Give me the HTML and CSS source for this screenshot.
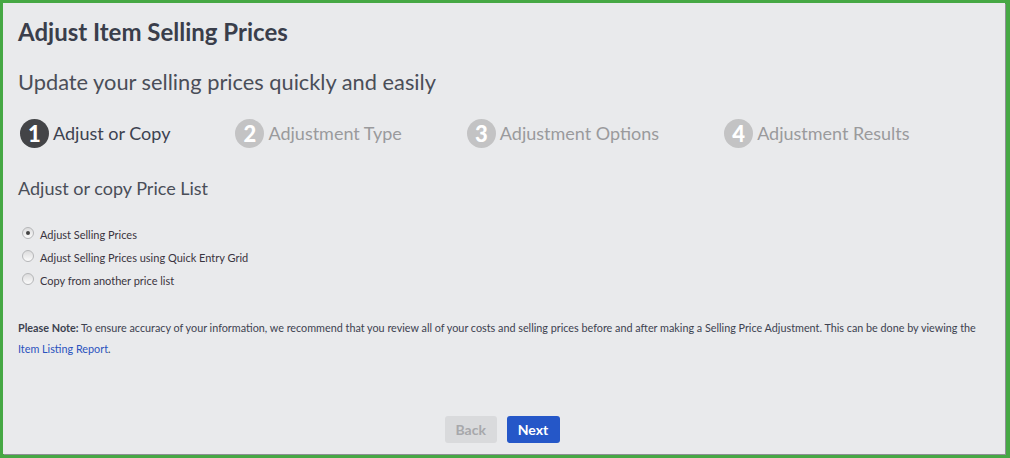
FILE: index.html
```html
<!DOCTYPE html>
<html>

<head>
    <meta charset="UTF-8">
    <title>Adjust Item Selling Prices</title>
    <link rel="stylesheet" href="styles.css">
</head>

<body>
    <div class="panel">
        <h1 class="title">Adjust Item Selling Prices</h1>
        <h2 class="subtitle">Update your selling prices quickly and easily</h2>

        <ul class="steps">
            <li class="step active"><span class="num">1</span>Adjust or Copy</li>
            <li class="step"><span class="num">2</span>Adjustment Type</li>
            <li class="step"><span class="num">3</span>Adjustment Options</li>
            <li class="step"><span class="num">4</span>Adjustment Results</li>
        </ul>

        <h3 class="section">Adjust or copy Price List</h3>

        <form class="options">
            <label class="option"><input type="radio" name="mode" checked><span class="dot"></span>Adjust Selling Prices</label>
            <label class="option"><input type="radio" name="mode"><span class="dot"></span>Adjust Selling Prices using Quick Entry Grid</label>
            <label class="option"><input type="radio" name="mode"><span class="dot"></span>Copy from another price list</label>
        </form>

        <p class="note"><b>Please Note:</b> To ensure accuracy of your information, we recommend that you review all of your costs and selling prices before and after making a Selling Price Adjustment. This can be done by viewing the <a href="#">Item Listing Report</a>.</p>

        <div class="actions">
            <button class="btn back" disabled>Back</button>
            <button class="btn next">Next</button>
        </div>
    </div>
</body>

</html>
```

FILE: styles.css
```css
html,
body {
    margin: 0;
    padding: 0;
    height: 100%;
}

body {
    background: #46a844;
    padding: 3px 5px 4px 3px;
    box-sizing: border-box;
    font-family: Lato, "Open Sans", sans-serif;
    color: #3d4250;
}

h1,
h2,
h3,
p,
ul {
    margin: 0;
    padding: 0;
}

ul {
    list-style: none;
}

.panel {
    height: 100%;
    box-sizing: border-box;
    background: #e9eaec;
    box-shadow: 1px 1px 0 #8e9094;
    padding: 15px 15px 0 15px;
    display: flex;
    flex-direction: column;
}

.title {
    font-size: 24px;
    font-weight: bold;
    line-height: 28px;
    color: #3a3e4b;
}

.subtitle {
    margin-top: 22px;
    font-size: 21.8px;
    font-weight: normal;
    line-height: 28px;
    color: #4a4e58;
}

.steps {
    margin-top: 22px;
    display: flex;
    gap: 65px;
    padding-left: 2px;
}

.step {
    display: flex;
    align-items: center;
    font-size: 18px;
    color: #9a9a9c;
    height: 30px;
}

.step .num {
    width: 29px;
    height: 29px;
    border-radius: 50%;
    background: #c3c3c4;
    color: #fff;
    font-weight: 900;
    font-size: 22px;
    line-height: 29px;
    text-align: center;
    margin-right: 4px;
}

.step.active {
    color: #3d4250;
}

.step.active .num {
    background: #434447;
}

.section {
    margin-top: 29px;
    font-size: 18px;
    font-weight: normal;
    line-height: 22px;
    color: #4a4e58;
}

.options {
    margin-top: 24px;
    display: flex;
    flex-direction: column;
    padding-left: 4px;
}

.option {
    display: flex;
    align-items: center;
    height: 23px;
    font-size: 11px;
    color: #3a3440;
}

.option input {
    display: none;
}

.option .dot {
    width: 10px;
    height: 10px;
    border-radius: 50%;
    border: 1px solid #b5b6b8;
    background: linear-gradient(#dcdcdd, #fbfbfb);
    margin-right: 6px;
    margin-top: -3px;
    position: relative;
}

.option input:checked + .dot::after {
    content: "";
    position: absolute;
    left: 3px;
    top: 3px;
    width: 4px;
    height: 4px;
    border-radius: 50%;
    background: #444;
}

.note {
    margin-top: 25px;
    font-size: 10.8px;
    line-height: 21px;
    color: #3d4250;
}

.note a {
    color: #2a52be;
    text-decoration: none;
}

.actions {
    margin-top: auto;
    margin-bottom: 11px;
    padding-right: 4px;
    display: flex;
    justify-content: center;
    gap: 10px;
}

.btn {
    font-family: Lato, "Open Sans", sans-serif;
    font-size: 14px;
    font-weight: bold;
    height: 27px;
    border: 0;
    border-radius: 3px;
    padding: 0 11px;
    cursor: pointer;
}

.back {
    width: 52px;
    background: #d9dadc;
    color: #a7a8ab;
    cursor: default;
}

.next {
    width: 53px;
    background: #2557c8;
    color: #fff;
}
```
